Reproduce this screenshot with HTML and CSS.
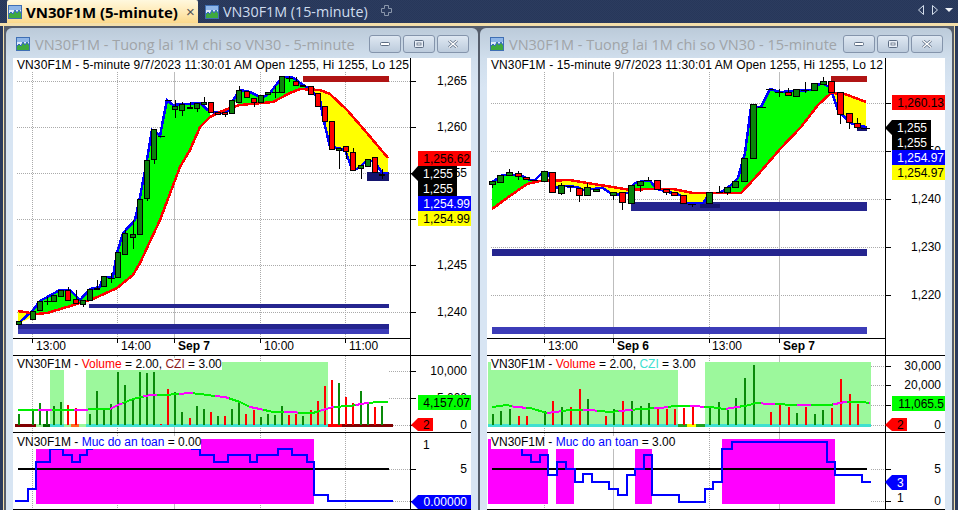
FILE: index.html
```html
<!DOCTYPE html>
<html lang="en">
<head>
<meta charset="utf-8">
<title>VN30F1M</title>
<link rel="stylesheet" href="styles.css">
</head>
<body>
<svg class="defs" width="0" height="0" aria-hidden="true">
  <defs>
    <symbol id="chart-icon" viewBox="0 0 14 14">
      <rect x=".5" y=".5" width="13" height="13" fill="#dfeaf8" stroke="#3f6fb4"/>
      <rect x="1" y="1" width="12" height="4" fill="#8fb6e8"/>
      <path d="M1 13V9l2-2 2 2 2-4 2 3 2-3 2 3v5z" fill="#3fa93f"/>
      <path d="M1 9l2-2 2 2 2-4 2 3 2-3 2 3" fill="none" stroke="#2f62c4"/>
    </symbol>
    <symbol id="btn-min" viewBox="0 0 12 8"><rect x="1.500" y="2.500" width="9" height="3" rx="1" fill="#fff" stroke="#5d6d83"/></symbol>
    <symbol id="btn-max" viewBox="0 0 12 8"><rect x="1.500" y=".5" width="9" height="7" rx="1" fill="#e8eef6" stroke="#5d6d83"/><rect x="4" y="3" width="4" height="2" fill="#fff" stroke="#5d6d83" stroke-width=".8"/></symbol>
    <symbol id="btn-x" viewBox="0 0 12 8"><path d="M2 .5l8 7M10 .5l-8 7" fill="none" stroke="#5d6d83" stroke-width="2.800"/><path d="M2 .5l8 7M10 .5l-8 7" fill="none" stroke="#fff" stroke-width="1.400"/></symbol>
  </defs>
</svg>
<div class="app">
  <header class="tabbar">
    <div class="tab tab-active">
      <svg class="tab-icon"><use href="#chart-icon"/></svg>
      <span class="tab-text">VN30F1M (5-minute)</span>
      <span class="tab-close">×</span>
    </div>
    <div class="tab">
      <svg class="tab-icon"><use href="#chart-icon"/></svg>
      <span class="tab-text">VN30F1M (15-minute)</span>
    </div>
    <svg class="tab-add" viewBox="0 0 11 11"><path d="M3.500 .5h4v3h3v4h-3v3h-4v-3h-3v-4h3z" fill="none" stroke="#8a97ab"/></svg>
    <div class="tab-nav">
      <svg viewBox="0 0 8 10"><path d="M6.500 .5v9l-5-4.500z" fill="none" stroke="#d4deec"/></svg>
      <svg viewBox="0 0 8 10"><path d="M1.500 .5v9l5-4.500z" fill="none" stroke="#d4deec"/></svg>
      <svg viewBox="0 0 8 10"><path d="M0 3h8l-4 4z" fill="#f2f5f9"/></svg>
    </div>
  </header>
  <main class="workspace">

    <section class="window">
      <div class="titlebar">
        <svg class="title-icon"><use href="#chart-icon"/></svg>
        <span class="title-text">VN30F1M - Tuong lai 1M chi so VN30 - 5-minute</span>
        <div class="title-buttons">
          <button class="tbtn"><svg><use href="#btn-min"/></svg></button>
          <button class="tbtn"><svg><use href="#btn-max"/></svg></button>
          <button class="tbtn"><svg><use href="#btn-x"/></svg></button>
        </div>
      </div>
      <div class="client">
        <div class="pane pane-price">
          <div class="pane-label label-price">VN30F1M - 5-minute 9/7/2023 11:30:01 AM Open 1255, Hi 1255, Lo 125</div>
          <svg viewBox="13 58 458 297" width="458" height="297">
            <path class="grid" d="M17 81.500H410M17 127.500H410M17 173.500H410M17 219.500H410M17 265.500H410M17 312.500H410M32.500 58V338M117.500 58V338M260.500 58V338M345.500 58V338"/>
            <path class="day" d="M174.500 58V338"/>
            <rect class="red-zone" x="303" y="76" width="86" height="6"/>
            <rect class="navy" x="89" y="304" width="300" height="4"/>
            <rect class="navy" x="18" y="324" width="371" height="5"/>
            <rect class="navy-light" x="18" y="329" width="371" height="5"/>
            <polygon class="fill-y" points="18,311 33,314 30,318 18,324"/>
            <polygon class="fill-g" points="33,310 40,301 60,290 70,290 80,300 90,289 100,287 103,277 113,277 117,253 123,233 135,220 140,197 147,160 152,130 157,133 160,136 163,120 167,100 173,105 200,103 210,112 210,117 200,127 190,150 180,167 160,220 140,263 133,275 117,288 93,299 67,307 47,313 37,314 33,314"/>
            <polygon class="fill-g" points="233,100 240,90 250,92 262,98 270,93 282,77 292,77 303,85 306,88 300,89 290,93 273,102 240,105"/>
            <polygon class="fill-y" points="306,88 311,90 320,100 323,117 330,147 338,148 345,150 352,169 357,169 368,160 375,162 382,173 388,173 388,158 367,133 347,110 330,94 320,90 300,89"/>
            <rect class="navy-dark" x="367" y="172" width="22" height="9"/>
            <polyline class="line-blue" points="18,323 20,322 33,310 40,301 60,290 70,290 80,300 90,289 100,287 103,277 113,277 117,253 123,233 135,220 140,197 147,160 152,130 157,133 160,136 163,120 167,100 173,105 200,103 210,112 220,113 230,110 233,100 240,90 250,92 262,98 270,93 282,77 292,77 303,85 311,90 320,100 323,117 330,147 338,148 345,150 352,169 357,169 368,160 375,162 382,173 388,173"/>
            <polyline class="line-red" points="18,311 37,314 47,313 67,307 93,299 117,288 133,275 140,263 160,220 180,167 190,150 200,127 210,117 220,112 230,108 240,105 273,102 290,93 300,89 320,90 330,94 347,110 367,133 388,158"/>
            <path class="wick" d="M47.500 297V305M44 301.500h7M68.500 287V290M76.500 290V299M83.500 304V307M97.500 280V288M104.500 286V287M111.500 273V283M108 278.500h7M125.500 230V233M133.500 220V249M147.500 198V201M154.500 159V164M158 136.500h7M165 100.500h7M175.500 100V118M182.500 102V116M190.500 102V107M197.500 108V112M204.500 97V102M225.500 114V117M239.500 86V90M254.500 102V107M275.500 86V98M272 92.500h7M289.500 76V82M286 78.500h7M296.500 77V81M339.500 150V169M346.500 151V159M353.500 148V152M361.500 168V179M382.500 169V179"/>
            <path class="candle-up" d="M16.500 321.500h5V324.500h-5zM30.500 311.500h5V319.500h-5zM37.500 301.500h5V310.500h-5zM51.500 295.500h5V301.500h-5zM58.500 290.500h5V296.500h-5zM80.500 300.500h5V304.500h-5zM87.500 289.500h5V300.500h-5zM94.500 288.500h5V289.500h-5zM101.500 276.500h5V286.500h-5zM115.500 252.500h5V277.500h-5zM122.500 233.500h5V254.500h-5zM130.500 234.500h5V237.500h-5zM137.500 199.500h5V234.500h-5zM144.500 160.500h5V198.500h-5zM151.500 129.500h5V159.500h-5zM172.500 106.500h5V109.500h-5zM179.500 104.500h5V110.500h-5zM194.500 103.500h5V108.500h-5zM201.500 102.500h5V104.500h-5zM229.500 100.500h5V113.500h-5zM236.500 90.500h5V102.500h-5zM258.500 95.500h5V102.500h-5zM265.500 92.500h5V94.500h-5zM279.500 76.500h5V92.500h-5zM300.500 85.500h5V86.500h-5zM336.500 148.500h5V150.500h-5zM358.500 165.500h5V168.500h-5zM365.500 159.500h5V166.500h-5zM379.500 174.500h5V175.500h-5z"/>
            <path class="candle-dn" d="M65.500 290.500h5V300.500h-5zM73.500 299.500h5V303.500h-5zM187.500 107.500h5V108.500h-5zM208.500 102.500h5V112.500h-5zM215.500 112.500h5V114.500h-5zM222.500 112.500h5V114.500h-5zM244.500 91.500h5V97.500h-5zM251.500 98.500h5V102.500h-5zM293.500 81.500h5V85.500h-5zM308.500 86.500h5V94.500h-5zM315.500 93.500h5V106.500h-5zM322.500 106.500h5V121.500h-5zM329.500 121.500h5V149.500h-5zM343.500 146.500h5V151.500h-5zM350.500 152.500h5V170.500h-5zM372.500 157.500h5V172.500h-5z"/>
            <path class="base" d="M13 338.500H410"/>
            <path class="tick" d="M32.500 338V343M117.500 338V343M174.500 338V343M260.500 338V343M345.500 338V343"/>
            <text class="ax" x="36" y="350">13:00</text>
            <text class="ax" x="121" y="350">14:00</text>
            <text class="ax ax-bold" x="178" y="350">Sep 7</text>
            <text class="ax" x="264" y="350">10:00</text>
            <text class="ax" x="349" y="350">11:00</text>
            <path class="axis" d="M410.500 58V355M411 81.500h5M411 127.500h5M411 173.500h5M411 219.500h5M411 265.500h5M411 312.500h5"/>
            <text class="ax ax-r" x="467" y="85">1,265</text>
            <text class="ax ax-r" x="467" y="131">1,260</text>
            <text class="ax ax-r" x="467" y="177">1,255</text>
            <text class="ax ax-r" x="467" y="269">1,245</text>
            <text class="ax ax-r" x="467" y="316">1,240</text>
            <rect class="tag-red" x="418" y="151" width="53" height="15"/>
            <text class="ax ax-r" x="470" y="163">1,256.62</text>
            <polygon class="tag-black" points="411,174 418,166 457,166 457,196 418,196 418,181"/>
            <text class="ax ax-r ax-w" x="453" y="178">1,255</text>
            <text class="ax ax-r ax-w" x="453" y="193">1,255</text>
            <rect class="tag-blue" x="418" y="196" width="53" height="15"/>
            <text class="ax ax-r ax-w" x="470" y="208">1,254.99</text>
            <rect class="tag-yellow" x="418" y="211" width="53" height="15"/>
            <text class="ax ax-r" x="470" y="223">1,254.99</text>
          </svg>
        </div>
        <div class="pane pane-volume">
          <div class="pane-label label-vol">VN30F1M - <span class="c-red">Volume</span> = 2.00, <span class="c-brown">CZI</span> = 3.00</div>
          <svg viewBox="13 356 458 76" width="458" height="76">
            <path class="grid" d="M32.500 356V432M117.500 356V432M260.500 356V432M345.500 356V432M389 371.500H410M389 398.500H410M393 425.500H410"/>
            <path class="day" d="M174.500 356V432"/>
            <rect class="zone-g" x="50" y="362" width="14" height="63"/>
            <rect class="zone-g" x="86" y="362" width="242" height="63"/>
            <rect class="s-dred" x="15" y="424" width="21" height="3"/>
            <rect class="s-lg" x="36" y="424" width="7" height="3"/>
            <rect class="s-dg" x="43" y="424" width="7" height="3"/>
            <rect class="s-tq" x="50" y="424" width="14" height="3"/>
            <rect class="s-lg" x="64" y="424" width="7" height="3"/>
            <rect class="s-or" x="71" y="424" width="8" height="3"/>
            <rect class="s-lg" x="79" y="424" width="7" height="3"/>
            <rect class="s-tq" x="86" y="424" width="242" height="3"/>
            <rect class="s-red" x="328" y="424" width="14" height="3"/>
            <rect class="s-dred" x="342" y="424" width="51" height="3"/>
            <path class="vol-up" d="M19 414V425M33 410V425M40 403V425M47 409V425M54 406V425M61 402V425M90 414V425M97 391V425M104 408V425M111 404V425M118 372V425M125 385V425M133 398V425M140 372V425M147 373V425M154 372V425M175 392V425M182 412V425M197 406V425M204 409V425M218 416V425M232 409V425M239 403V425M261 417V425M268 414V425M275 415V425M282 406V425M303 416V425M339 383V425M361 391V425M368 403V425M382 406V425"/>
            <path class="vol-dn" d="M68 405V425M76 408V425M161 424V425M168 389V425M190 418V425M211 412V425M225 416V425M246 414V425M254 410V425M289 415V425M296 414V425M311 410V425M318 401V425M325 386V425M332 380V425M346 397V425M353 403V425M375 407V425"/>
            <polyline class="cz-g" points="18,410 86,410 90,409 110,409 118,405 133,399 150,395 165,395 190,393 200,394 215,396 225,397 240,402 250,407 260,409 273,412 290,412 303,413 313,413 323,410 333,407 350,406 367,403 380,402 388,402"/>
            <polyline class="cz-m" points="18,410 86,410 90,409 110,409 118,405 133,399 150,395 165,395 190,393 200,394 215,396 225,397 240,402 250,407 260,409 273,412 290,412 303,413 313,413 323,410 333,407 350,406 367,403 380,402 388,402"/>
            <path class="axis" d="M410.500 356V432M411 371.500h5M411 398.500h5M411 425.500h5"/>
            <text class="ax ax-r" x="467" y="375">10,000</text>
            <text class="ax ax-r" x="467" y="402">5,000</text>
            <text class="ax ax-r" x="467" y="429">0</text>
            <rect class="tag-lime" x="418" y="395" width="53" height="15"/>
            <text class="ax ax-r" x="470" y="407">4,157.07</text>
            <polygon class="tag-redp" points="411,425 418,418 433,418 433,431 418,431"/>
            <text class="ax" x="423" y="429">2</text>
          </svg>
        </div>
        <div class="pane pane-safety">
          <div class="pane-label label-safe">VN30F1M - <span class="c-blue">Muc do an toan</span> = 0.00</div>
          <svg viewBox="13 433 458 76" width="458" height="76">
            <path class="grid" d="M32.500 433V509M117.500 433V509M260.500 433V509M345.500 433V509M389 469.500H410M393 501.500H410"/>
            <path class="day" d="M174.500 433V509"/>
            <rect class="zone-m" x="36" y="439" width="278" height="65"/>
            <path class="black-line" d="M18 469H389"/>
            <path class="safe" d="M15 501H28V489H36V462H50V449H63V455H72V462H80V455H87V449H92V441H192V449H200V455H214V462H228V455H250V462H257V455H278V449H292V455H307V462H314V495H328V501H393"/>
            <path class="axis" d="M410.500 433V509M411 469.500h5M411 501.500h5"/>
            <text class="ax" x="423" y="449">1</text>
            <text class="ax ax-r" x="467" y="473">5</text>
            <polygon class="tag-bluep" points="411,502 418,495 471,495 471,509 418,509"/>
            <text class="ax ax-r ax-w" x="467" y="506">0.00000</text>
          </svg>
        </div>
      </div>
    </section>

    <section class="window">
      <div class="titlebar">
        <svg class="title-icon"><use href="#chart-icon"/></svg>
        <span class="title-text">VN30F1M - Tuong lai 1M chi so VN30 - 15-minute</span>
        <div class="title-buttons">
          <button class="tbtn"><svg><use href="#btn-min"/></svg></button>
          <button class="tbtn"><svg><use href="#btn-max"/></svg></button>
          <button class="tbtn"><svg><use href="#btn-x"/></svg></button>
        </div>
      </div>
      <div class="client">
        <div class="pane pane-price">
          <div class="pane-label label-price">VN30F1M - 15-minute 9/7/2023 11:30:01 AM Open 1255, Hi 1255, Lo 12</div>
          <svg viewBox="487 58 458 297" width="458" height="297">
            <path class="grid" d="M491 103.500H885M491 151.500H885M491 199.500H885M491 247.500H885M491 295.500H885M544.500 58V338M709.500 58V338"/>
            <path class="day" d="M613.500 58V338M779.500 58V338"/>
            <rect class="red-zone" x="831" y="76" width="36" height="6"/>
            <rect class="navy" x="631" y="202" width="236" height="9"/>
            <rect class="navy-dark" x="700" y="204" width="20" height="4"/>
            <rect class="navy" x="492" y="249" width="375" height="7"/>
            <rect class="navy-light" x="492" y="327" width="375" height="7"/>
            <rect class="navy-dark" x="857" y="126" width="10" height="5"/>
            <polygon class="fill-g" points="492,182 503,175 520,175 530,180 535,180 540,181 527,184 507,198 492,209"/>
            <polygon class="fill-y" points="548,173 556,188 563,186 577,187 583,190 603,188 613,195 628,193 630,190 613,187 593,184 570,180 552,180"/>
            <polygon class="fill-g" points="632,188 635,183 643,181 650,181 655,188 647,189"/>
            <polygon class="fill-y" points="657,189 680,195 687,203 703,203 710,193 693,193 673,189"/>
            <polygon class="fill-g" points="731,185 738,178 745,153 751,107 761,107 770,89 780,92 811,90 821,83 830,87 832,93 818,105 801,127 781,148 755,178 741,193 725,193"/>
            <polygon class="fill-y" points="832,93 838,110 850,123 866,127 866,102 845,94"/>
            <polyline class="line-blue" points="492,182 503,175 520,175 530,180 535,180 543,172 548,173 556,188 563,186 577,187 583,190 603,188 613,195 628,193 635,183 643,181 650,181 657,189 680,195 687,203 703,203 710,193 720,193 731,185 738,178 745,153 751,107 761,107 770,89 780,92 811,90 821,83 830,87 838,110 850,123 866,127"/>
            <polyline class="line-red" points="492,209 507,198 527,184 540,181 570,180 593,184 613,187 630,190 647,189 673,189 693,193 741,193 755,178 781,148 801,127 818,105 831,93 845,94 866,102"/>
            <path class="wick" d="M492.500 184V188M509.500 169V172M518.500 171V173M518.500 176V180M530 180.500h8M561.500 183V185M561.500 193V195M566 186.500h8M570.500 186V192M579.500 195V202M587.500 183V187M613.500 195V200M622.500 202V210M640.500 185V192M644 180.500h8M648.500 177V181M666.500 192V195M688 204.500h8M692.500 204V207M716 192.500h7M719.500 186V192M727.500 192V195M758 107.500h8M766 89.500h8M775 92.500h8M779.500 89V97M788.500 88V92M801 90.500h8M805.500 82V93M823.500 77V81M840.500 114V124M849.500 122V129M857.500 118V123M857.500 127V129M861 128.500h9"/>
            <path class="candle-up" d="M489.500 181.500h6V184.500h-6zM497.500 175.500h6V182.500h-6zM506.500 172.500h6V175.500h-6zM541.500 171.500h6V181.500h-6zM558.500 185.500h6V193.500h-6zM584.500 187.500h6V195.500h-6zM593.500 189.500h6V191.500h-6zM610.500 192.500h6V195.500h-6zM628.500 185.500h6V203.500h-6zM637.500 181.500h6V185.500h-6zM706.500 192.500h6V203.500h-6zM724.500 187.500h6V192.500h-6zM732.500 181.500h6V187.500h-6zM741.500 158.500h6V181.500h-6zM750.500 104.500h6V158.500h-6zM793.500 89.500h6V96.500h-6zM811.500 83.500h6V90.500h-6zM820.500 81.500h6V84.500h-6z"/>
            <path class="candle-dn" d="M515.500 173.500h6V176.500h-6zM523.500 177.500h6V179.500h-6zM549.500 172.500h6V192.500h-6zM576.500 188.500h6V195.500h-6zM619.500 192.500h6V202.500h-6zM654.500 180.500h6V189.500h-6zM663.500 189.500h6V192.500h-6zM671.500 192.500h6V195.500h-6zM680.500 195.500h6V203.500h-6zM785.500 92.500h6V95.500h-6zM828.500 81.500h6V92.500h-6zM837.500 92.500h6V114.500h-6zM846.500 113.500h6V122.500h-6zM854.500 123.500h6V127.500h-6z"/>
            <path class="base" d="M487 338.500H885"/>
            <path class="tick" d="M544.500 338V343M613.500 338V343M709.500 338V343M779.500 338V343"/>
            <text class="ax" x="548" y="350">13:00</text>
            <text class="ax ax-bold" x="617" y="350">Sep 6</text>
            <text class="ax" x="712" y="350">13:00</text>
            <text class="ax ax-bold" x="783" y="350">Sep 7</text>
            <path class="axis" d="M885.500 58V355M886 103.500h5M886 151.500h5M886 199.500h5M886 247.500h5M886 295.500h5"/>
            <text class="ax ax-r" x="941" y="155">1,250</text>
            <text class="ax ax-r" x="941" y="203">1,240</text>
            <text class="ax ax-r" x="941" y="251">1,230</text>
            <text class="ax ax-r" x="941" y="299">1,220</text>
            <rect class="tag-red" x="892" y="95" width="53" height="15"/>
            <text class="ax ax-r" x="944" y="107">1,260.13</text>
            <polygon class="tag-black" points="885,128 892,120 931,120 931,150 892,150 892,135"/>
            <text class="ax ax-r ax-w" x="927" y="132">1,255</text>
            <text class="ax ax-r ax-w" x="927" y="147">1,255</text>
            <rect class="tag-blue" x="892" y="150" width="53" height="15"/>
            <text class="ax ax-r ax-w" x="944" y="162">1,254.97</text>
            <rect class="tag-yellow" x="892" y="165" width="53" height="15"/>
            <text class="ax ax-r" x="944" y="177">1,254.97</text>
          </svg>
        </div>
        <div class="pane pane-volume">
          <div class="pane-label label-vol">VN30F1M - <span class="c-red">Volume</span> = 2.00, <span class="c-cyan">CZI</span> = 3.00</div>
          <svg viewBox="487 356 458 76" width="458" height="76">
            <path class="grid" d="M544.500 356V432M709.500 356V432M871 366.500H885M871 385.500H885M871 405.500H885M871 425.500H885"/>
            <path class="day" d="M613.500 356V432M779.500 356V432"/>
            <rect class="zone-g" x="488" y="362" width="190" height="63"/>
            <rect class="zone-g" x="705" y="362" width="166" height="63"/>
            <rect class="s-tq" x="488" y="424" width="190" height="3"/>
            <rect class="s-mg" x="678" y="424" width="9" height="3"/>
            <rect class="s-yl" x="687" y="424" width="9" height="3"/>
            <rect class="s-mg" x="696" y="424" width="9" height="3"/>
            <rect class="s-tq" x="705" y="424" width="166" height="3"/>
            <path class="vol-up" d="M493 414V425M501 411V425M510 409V425M545 411V425M562 407V425M588 399V425M614 409V425M632 401V425M641 406V425M649 403V425M710 407V425M719 402V425M728 410V425M736 398V425M745 378V425M754 365V425M797 413V425M815 414V425M823 410V425"/>
            <path class="vol-dn" d="M519 416V425M527 416V425M553 401V425M571 407V425M580 389V425M606 416V425M623 401V425M658 407V425M667 409V425M675 409V425M684 408V425M693 406V425M771 412V425M780 404V425M789 407V425M806 407V425M832 408V425M841 379V425M850 394V425M858 404V425"/>
            <polyline class="cz-g" points="492,407 507,405 515,407 530,408 547,413 555,412 570,410 590,410 600,411 610,412 620,411 640,409 660,408 675,406 690,406 710,407 725,409 750,405 755,403 770,404 800,405 830,405 845,402 862,402 870,403"/>
            <polyline class="cz-m" points="492,407 507,405 515,407 530,408 547,413 555,412 570,410 590,410 600,411 610,412 620,411 640,409 660,408 675,406 690,406 710,407 725,409 750,405 755,403 770,404 800,405 830,405 845,402 862,402 870,403"/>
            <path class="axis" d="M885.500 356V432M886 366.500h5M886 385.500h5M886 405.500h5M886 425.500h5"/>
            <text class="ax ax-r" x="941" y="370">30,000</text>
            <text class="ax ax-r" x="941" y="389">20,000</text>
            <text class="ax ax-r" x="941" y="429">0</text>
            <rect class="tag-lime" x="892" y="396" width="53" height="15"/>
            <text class="ax ax-r" x="944" y="408">11,065.5</text>
            <polygon class="tag-redp" points="885,425 892,418 907,418 907,431 892,431"/>
            <text class="ax" x="897" y="429">2</text>
          </svg>
        </div>
        <div class="pane pane-safety">
          <div class="pane-label label-safe">VN30F1M - <span class="c-blue">Muc do an toan</span> = 3.00</div>
          <svg viewBox="487 433 458 76" width="458" height="76">
            <path class="grid" d="M544.500 433V509M709.500 433V509M871 469.500H885M871 501.500H885"/>
            <path class="day" d="M613.500 433V509M779.500 433V509"/>
            <rect class="zone-m" x="488" y="439" width="60" height="65"/>
            <rect class="zone-m" x="556" y="449" width="18" height="55"/>
            <rect class="zone-m" x="635" y="449" width="17" height="55"/>
            <rect class="zone-m" x="722" y="439" width="113" height="65"/>
            <path class="black-line" d="M492 469H867"/>
            <path class="safe" d="M522 449V455H531V462H540V455H548V475H557V462H566V469H575V482H583V474H592V482H609V489H618V495H627V475H635V469H644V455H652V495H679V502H705V489H713V482H722V449H732V442H827V462H835V475H862V482H871"/>
            <path class="axis" d="M885.500 433V509M886 469.500h5M886 501.500h5"/>
            <text class="ax ax-r" x="941" y="473">5</text>
            <text class="ax" x="897" y="502">1</text>
            <text class="ax ax-r" x="941" y="505">0</text>
            <polygon class="tag-bluep" points="885,482 892,475 907,475 907,490 892,490"/>
            <text class="ax ax-w" x="897" y="487">3</text>
          </svg>
        </div>
      </div>
    </section>

  </main>
</div>
</body>
</html>
```

FILE: styles.css
```css
* { box-sizing: border-box; }
html, body { margin: 0; padding: 0; width: 958px; height: 510px; overflow: hidden; }
body { font-family: "Liberation Sans", Arial, sans-serif; background: #4d5766; }
.defs { position: absolute; }

.app { display: flex; flex-direction: column; height: 510px; }

.tabbar {
  display: flex; align-items: flex-start; flex: none; height: 26px; padding-left: 7px;
  background: repeating-conic-gradient(#2c3c5f 0 25%, #27375a 0 50%) 0 0 / 2px 2px;
  border-bottom: 3px solid #f4dfaa;
}
.tab {
  display: flex; align-items: center; gap: 4px; height: 23px; padding-left: 1px;
  font-family: "Open Sans", sans-serif; font-size: 14.300px; color: #cfdcee;
}
.tab-active {
  width: 191px; margin-right: 6px; color: #000; font-size: 15px; font-weight: 700;
  background: linear-gradient(#fff8de, #ffe9b4 55%, #fbd98c);
  border-radius: 2px 2px 0 0;
}
.tab-icon { width: 14px; height: 14px; flex: none; }
.tab-close { margin-left: 4px; font-family: "Liberation Sans", sans-serif; font-size: 15px; font-weight: 400; color: #555; }
.tab-add { width: 11px; height: 11px; margin: 5px 0 0 13px; }
.tab-nav { display: flex; gap: 6px; margin: 5px 5px 0 auto; }
.tab-nav svg { width: 8px; height: 10px; }

.workspace {
  flex: 1; display: flex; gap: 2px; padding: 2px 0 0 6px; overflow: hidden;
  background: linear-gradient(90deg, #2a3a5c 0 3px, #f4dfaa 3px 4px, #555d6b 4px 954px, #f4dfaa 954px 955px, #2a3a5c 955px);
}
.window {
  flex: none; width: 472px; height: 482px; display: flex; flex-direction: column;
  border-radius: 6px 6px 0 0;
  background: linear-gradient(#bccbda 0, #d0deec 30px, #d8e5f3 60px);
}
.titlebar { flex: none; display: flex; align-items: center; height: 30px; padding: 2px 9px 0 10px; }
.title-icon { width: 14px; height: 14px; flex: none; }
.title-text { margin-left: 5px; font-family: "Open Sans", sans-serif; font-size: 14.500px; color: #a0a4a8; white-space: nowrap; }
.title-buttons { display: flex; gap: 2px; margin-left: auto; }
.tbtn {
  display: flex; align-items: center; justify-content: center; width: 32px; height: 18px; padding: 0;
  border: 1px solid #8494ab; border-radius: 3px;
  background: linear-gradient(#dfe8f2, #bccbdc);
}
.tbtn svg { width: 12px; height: 8px; }

.client { flex: none; width: 458px; margin-left: 7px; background: #fff; }
.pane { position: relative; border-bottom: 1px solid #000; }
.pane svg { display: block; }
.pane-price { height: 298px; }
.pane-volume { height: 77px; }
.pane-safety { height: 77px; }

.pane-label {
  position: absolute; left: 4px; z-index: 1; background: #fff; color: #000;
  font-size: 12px; white-space: nowrap;
}
.label-price { top: 0; height: 14px; line-height: 14px; letter-spacing: .1px; }
.label-vol { top: 2px; height: 12px; line-height: 12px; }
.label-safe { top: 3px; height: 13px; line-height: 13px; }
.c-red { color: #ff0000; }
.c-brown { color: #8b1a1a; }
.c-cyan { color: #40e0d0; }
.c-blue { color: #0000ff; }

.grid { fill: none; stroke: #aaa; stroke-width: 1; stroke-dasharray: 1 1; shape-rendering: crispEdges; }
.day { fill: none; stroke: #bdbdbd; stroke-width: 1.500; shape-rendering: crispEdges; }
.base, .tick, .axis, .wick { fill: none; stroke: #000; stroke-width: 1; shape-rendering: crispEdges; }
.red-zone { fill: #b01414; }
.navy { fill: #25258f; }
.navy-light { fill: #3c3cb8; }
.navy-dark { fill: #14146e; }
.fill-g { fill: #00ff00; }
.fill-y { fill: #ffff00; }
.line-blue, .line-red { fill: none; stroke-width: 2.500; shape-rendering: crispEdges; }
.line-blue { stroke: #0000ff; }
.line-red { stroke: #ff0000; }
.candle-up, .candle-dn { stroke: #000; stroke-width: 1; shape-rendering: crispEdges; }
.candle-up { fill: #0a840a; }
.candle-dn { fill: #ff0000; }

.ax { font-family: "Liberation Sans", Arial, sans-serif; font-size: 12px; fill: #000; }
.ax-r { text-anchor: end; }
.ax-w { fill: #fff; }
.ax-bold { font-weight: 700; }

.tag-red, .tag-redp { fill: #ff0000; }
.tag-black { fill: #000; }
.tag-blue, .tag-bluep { fill: #0000ff; }
.tag-yellow { fill: #ffff00; }
.tag-lime { fill: #00ff00; }

.zone-g { fill: #9cf89c; }
.zone-m { fill: #ff00ff; }
.s-dred { fill: #800000; }
.s-lg { fill: #9cf89c; }
.s-dg { fill: #006400; }
.s-mg { fill: #22a522; }
.s-tq { fill: #40e0d0; }
.s-or { fill: #ff6a20; }
.s-red { fill: #ff0000; }
.s-yl { fill: #ffff00; }
.vol-up, .vol-dn { fill: none; stroke-width: 2; shape-rendering: crispEdges; }
.vol-up { stroke: #0a8a0a; }
.vol-dn { stroke: #ff0000; }
.cz-g, .cz-m { fill: none; stroke-width: 2; shape-rendering: crispEdges; }
.cz-g { stroke: #00ee00; }
.cz-m { stroke: #ff00ff; stroke-dasharray: 14 22; stroke-dashoffset: -20; }
.black-line { fill: none; stroke: #000; stroke-width: 2; shape-rendering: crispEdges; }
.safe { fill: none; stroke: #0000ff; stroke-width: 2; shape-rendering: crispEdges; }
```
